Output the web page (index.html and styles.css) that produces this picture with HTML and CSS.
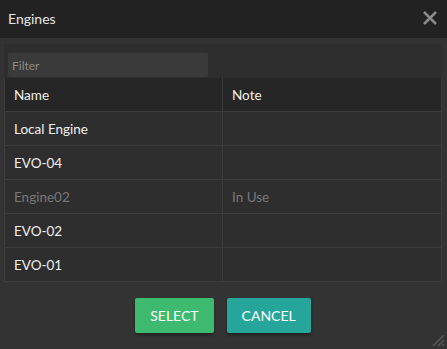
FILE: index.html
```html
<!DOCTYPE html>
<html lang="en">
<head>
    <meta charset="UTF-8">
    <meta name="viewport" content="width=device-width, initial-scale=1.0">
    <title>Engines</title>
    <link rel="stylesheet" href="styles.css">
</head>
<body>
    <div class="dialog">
        <div class="dialog-header">
            <span class="dialog-title">Engines</span>
            <span class="close-btn">
                <svg width="16" height="16" viewBox="0 0 16 16">
                    <path d="M2 2 L14 14 M14 2 L2 14" stroke="#8a8a8a" stroke-width="2.6"/>
                </svg>
            </span>
        </div>

        <div class="dialog-body">
            <div class="panel">
                <div class="filter-row">
                    <input type="text" class="filter" placeholder="Filter">
                </div>
                <table class="engines">
                    <thead>
                        <tr><th>Name</th><th>Note</th></tr>
                    </thead>
                    <tbody>
                        <tr><td>Local Engine</td><td></td></tr>
                        <tr><td>EVO-04</td><td></td></tr>
                        <tr class="disabled"><td>Engine02</td><td>In Use</td></tr>
                        <tr><td>EVO-02</td><td></td></tr>
                        <tr><td>EVO-01</td><td></td></tr>
                    </tbody>
                </table>
            </div>

            <div class="actions">
                <button class="btn btn-select">SELECT</button>
                <button class="btn btn-cancel">CANCEL</button>
            </div>
        </div>

        <svg class="grip" width="14" height="14" viewBox="0 0 14 14">
            <path d="M13 2 L2 13 M13 7 L7 13 M13 11 L11 13" stroke="#5a5a5a" stroke-width="1.4"/>
        </svg>
    </div>
</body>
</html>
```

FILE: styles.css
```css
body {
    margin: 0;
    background-color: #333;
    font-family: Lato, "Open Sans", sans-serif;
}
.dialog {
    width: 447px;
    height: 349px;
    background-color: #333;
    position: relative;
    overflow: hidden;
}
.dialog-header {
    height: 38px;
    background-color: #222;
    display: flex;
    align-items: center;
    justify-content: space-between;
    padding: 0 9px 0 8px;
}
.dialog-title {
    color: #e6e6e6;
    font-size: 14px;
    margin-top: -1px;
}
.close-btn {
    display: flex;
    margin-top: -3px;
}
.dialog-body {
    padding: 6px 5px 0 4px;
}
.panel {
    background-color: #2e2e2e;
}
.filter-row {
    padding: 9px 4px 1px;
}
.filter {
    width: 200px;
    height: 24px;
    box-sizing: border-box;
    background-color: #3a3a3a;
    border: none;
    border-radius: 2px;
    padding: 0 4px;
    color: #ddd;
    font-family: Lato, sans-serif;
    font-size: 12px;
    outline: none;
}
.filter::placeholder {
    color: #8a8a8a;
}
.engines {
    width: 100%;
    border-collapse: collapse;
    font-size: 13.5px;
    color: #f0f0f0;
}
.engines th, .engines td {
    height: 33px;
    padding: 0 9px;
    text-align: left;
    font-weight: normal;
    border: 1px solid #3c3c3c;
    border-top: none;
}
.engines th:first-child, .engines td:first-child {
    width: 199px;
}
.engines thead th {
    background-color: #262626;
    border-bottom: 1px solid #3c3c3c;
}
.engines tr.disabled td {
    color: #777;
}
.actions {
    display: flex;
    justify-content: center;
    gap: 13px;
    padding-top: 16px;
}
.btn {
    height: 35px;
    border: none;
    border-radius: 2px;
    color: #fff;
    font-family: Lato, sans-serif;
    font-size: 14px;
    padding: 0 15px;
    box-shadow: 0 2px 3px rgba(0,0,0,0.35);
    cursor: pointer;
}
.btn-select {
    background-color: #3dba6f;
}
.btn-cancel {
    background-color: #26a69a;
}
.grip {
    position: absolute;
    right: 2px;
    bottom: 2px;
}
```
